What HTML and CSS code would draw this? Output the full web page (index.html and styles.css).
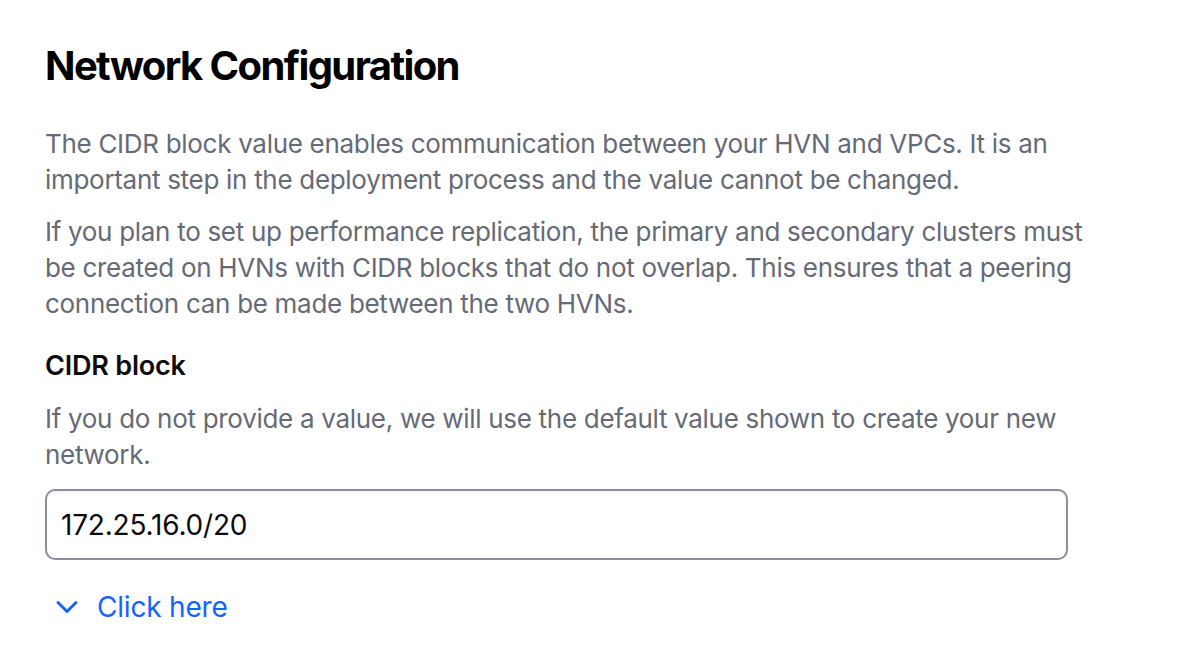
FILE: index.html
```html
<!DOCTYPE html>
<html lang="en">
<head>
<meta charset="utf-8">
<title>Network Configuration</title>
<link rel="stylesheet" href="styles.css">
</head>
<body>
<main class="panel">
  <h1 class="title">Network Configuration</h1>
  <p class="text">The CIDR block value enables communication between your HVN and VPCs. It is an important step in the deployment process and the value cannot be changed.</p>
  <p class="text">If you plan to set up performance replication, the primary and secondary clusters must be created on HVNs with CIDR blocks that do not overlap. This ensures that a peering connection can be made between the two HVNs.</p>
  <div class="field">
    <label class="label" for="cidr">CIDR block</label>
    <p class="text helper">If you do not provide a value, we will use the default value shown to create your new network.</p>
    <input class="input" id="cidr" type="text" value="172.25.16.0/20">
  </div>
  <button class="toggle" type="button">
    <svg class="chev" width="24" height="24" viewBox="0 0 24 24" aria-hidden="true"><path d="M3 7.5l9 9 9-9" fill="none" stroke="currentColor" stroke-width="3" stroke-linecap="round" stroke-linejoin="round"/></svg>
    <span>Click here</span>
  </button>
</main>
</body>
</html>
```
FILE: styles.css
```css
html, body {
  margin: 0;
  background: #ffffff;
}
body {
  font-family: Inter, "Noto Sans", sans-serif;
  color: #0c0c0e;
}
.panel {
  padding: 42px 0 0 45px;
  width: 1055px;
  display: flex;
  flex-direction: column;
  align-items: flex-start;
}
.title {
  margin: 0;
  font-size: 40px;
  line-height: 48px;
  font-weight: 700;
  letter-spacing: -1.6px;
  color: #000;
}
.text {
  margin: 0;
  font-size: 26px;
  line-height: 36px;
  letter-spacing: -0.3px;
  color: #656a76;
}
.title + .text {
  margin-top: 36px;
}
.text + .text {
  margin-top: 16px;
}
.field {
  margin-top: 26px;
  display: flex;
  flex-direction: column;
  align-items: flex-start;
}
.label {
  font-size: 27px;
  line-height: 36px;
  font-weight: 600;
  letter-spacing: -0.2px;
  color: #0c0c0e;
}
.helper {
  margin-top: 17px;
}
.input {
  margin-top: 16px;
  box-sizing: border-box;
  width: 1023px;
  height: 71px;
  padding: 0 14px;
  border: 2px solid #8c909c;
  border-radius: 10px;
  font-family: Inter, "Noto Sans", sans-serif;
  font-size: 28px;
  letter-spacing: -0.2px;
  color: #0c0c0e;
  background: #fff;
  box-shadow: inset 0 2px 2px rgba(97,104,117,0.08);
  outline: none;
}
.toggle {
  margin-top: 29px;
  margin-left: 10px;
  padding: 0;
  border: 0;
  background: none;
  display: flex;
  align-items: center;
  gap: 18px;
  font-family: Inter, "Noto Sans", sans-serif;
  font-size: 28px;
  line-height: 36px;
  letter-spacing: -0.2px;
  color: #1563ff;
  cursor: pointer;
}
.chev {
  display: block;
}
```
